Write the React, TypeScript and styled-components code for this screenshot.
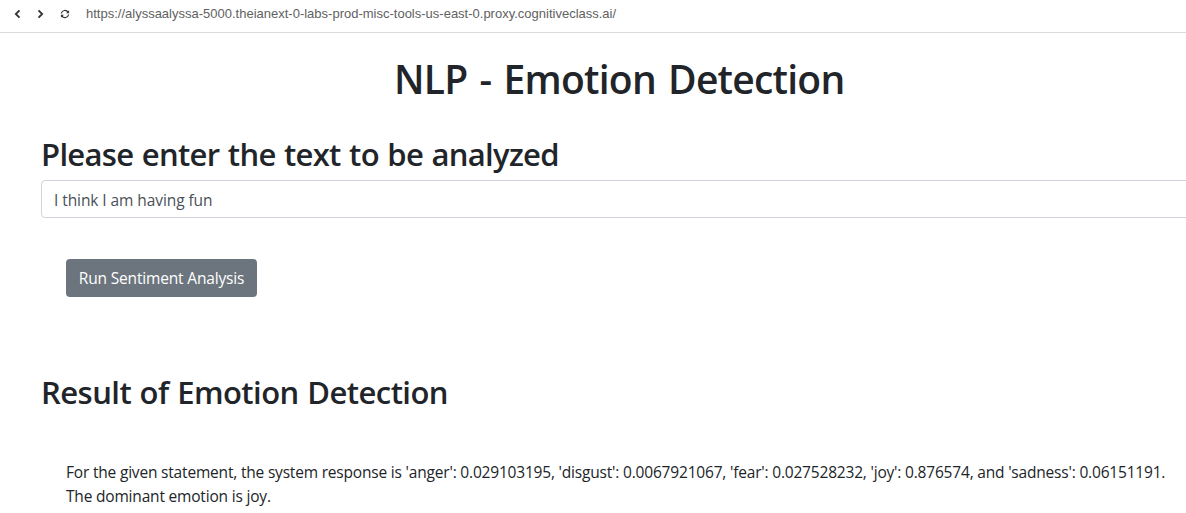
import React from 'react';
import styled, { createGlobalStyle } from 'styled-components';

const Global = createGlobalStyle`
  * { box-sizing: border-box; }
  html, body, #root { margin: 0; height: 100%; }
  body { background: #fff; overflow: hidden; color: #212529; font: 400 15.5px/24px "Segoe UI", "Open Sans", "Noto Sans", sans-serif; letter-spacing: -0.19px; }
`;

const Toolbar = styled.header`
  display: flex;
  align-items: center;
  height: 33px;
  padding: 0 0 5px 9px;
  border-bottom: 1px solid #dcdcdc;
`;

const NavButton = styled.button<{ $gap: number }>`
  display: flex;
  width: 16px;
  height: 16px;
  padding: 0;
  margin-right: ${(p) => p.$gap}px;
  border: 0;
  background: none;
  color: #333;
`;

const Address = styled.span`
  font: 13px/16px "Liberation Sans", Arial, sans-serif;
  letter-spacing: 0;
  color: #616161;
  white-space: nowrap;
`;

const Page = styled.main`
  width: 1240px;
  padding: 22px 0 0 41px;
`;

const Title = styled.h1`
  margin: 0 0 29px 353px;
  font-size: 39px;
  line-height: 48px;
  font-weight: 600;
  letter-spacing: -0.76px;
  word-spacing: 2.8px;
  white-space: nowrap;
`;

const Heading = styled.h2<{ $tracking: number }>`
  margin: 0 0 4px;
  font-size: 31px;
  line-height: 44px;
  font-weight: 600;
  letter-spacing: ${(p) => p.$tracking}px;
  word-spacing: 1px;
  white-space: nowrap;
`;

const TextInput = styled.input`
  display: block;
  width: 100%;
  height: 38px;
  padding: 8px 12px 6px;
  border: 1px solid #ced4da;
  border-radius: 4px;
  font: inherit;
  letter-spacing: -0.08px;
  color: #495057;
`;

const RunButton = styled.button`
  display: block;
  width: 191px;
  height: 38px;
  margin: 41px 0 73px 25px;
  padding: 0 0 1px;
  border: 0;
  border-radius: 4px;
  background: #6c757d;
  color: #fff;
  font: inherit;
  letter-spacing: -0.17px;
  white-space: nowrap;
`;

const Result = styled.div`
  margin: 46px 0 0 25px;
  white-space: nowrap;
`;

export default function App() {
  return (
    <>
      <Global />
      <Toolbar>
        <NavButton $gap={8} aria-label="Back">
          <svg width="16" height="16" fill="none" stroke="currentColor" strokeWidth="1.8"><path d="M10.500 4.300 6.800 8l3.700 3.700" /></svg>
        </NavButton>
        <NavButton $gap={8} aria-label="Forward">
          <svg width="16" height="16" fill="none" stroke="currentColor" strokeWidth="1.8"><path d="m5.500 4.300 3.700 3.700-3.700 3.700" /></svg>
        </NavButton>
        <NavButton $gap={13} aria-label="Reload">
          <svg width="16" height="16" fill="none" stroke="currentColor" strokeWidth="1.2"><path d="M4.300 7.500a3.600 3.600 0 0 1 6.700-1.200M4.900 9.700a3.600 3.600 0 0 0 6.700-1.200" /><path d="M12.100 4.300v3H9.100zM3.900 11.700v-3h3z" fill="currentColor" stroke="none" /></svg>
        </NavButton>
        <Address>https://alyssaalyssa-5000.theianext-0-labs-prod-misc-tools-us-east-0.proxy.cognitiveclass.ai/</Address>
      </Toolbar>
      <Page>
        <Title>NLP - Emotion Detection</Title>
        <Heading $tracking={-0.68}>Please enter the text to be analyzed</Heading>
        <TextInput defaultValue="I think I am having fun" />
        <RunButton>Run Sentiment Analysis</RunButton>
        <Heading $tracking={-0.54}>Result of Emotion Detection</Heading>
        <Result>
          <div>For the given statement, the system response is 'anger': 0.029103195, 'disgust': 0.0067921067, 'fear': 0.027528232, 'joy': 0.876574, and 'sadness': 0.06151191.</div>
          <div>The dominant emotion is joy.</div>
        </Result>
      </Page>
    </>
  );
}
